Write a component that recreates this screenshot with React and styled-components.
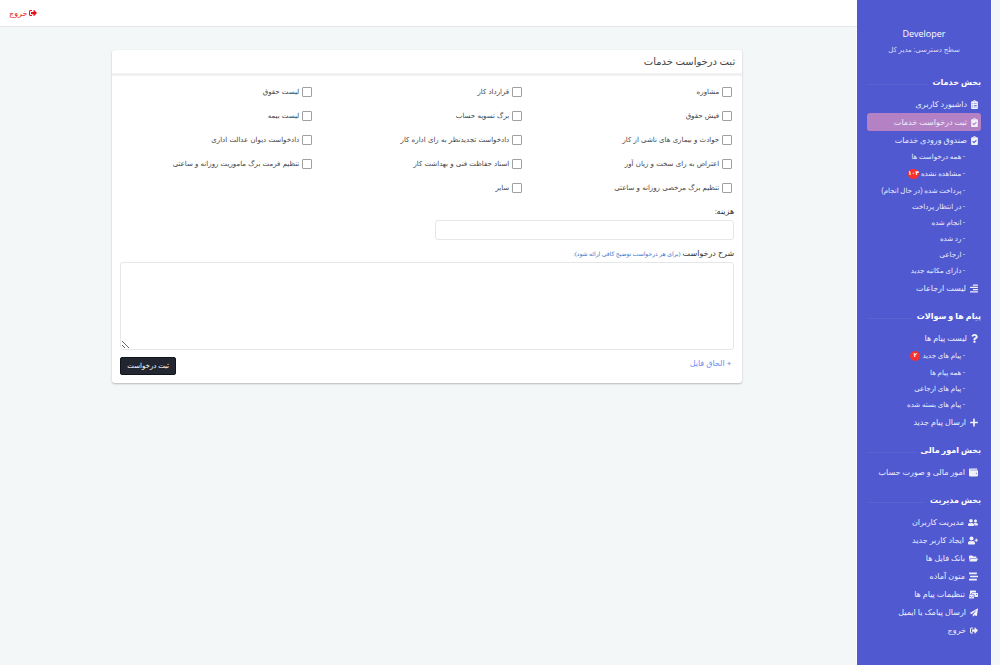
import React, { useState } from 'react';
import styled, { createGlobalStyle } from 'styled-components';
import {
  FaClipboardList,
  FaClipboardCheck,
  FaStream,
  FaAlignRight,
  FaQuestion,
  FaPlus,
  FaWallet,
  FaUserFriends,
  FaUserPlus,
  FaFolderOpen,
  FaMailBulk,
  FaPaperPlane,
  FaSignOutAlt,
} from 'react-icons/fa';

const menu = [
  {
    title: 'بخش خدمات',
    items: [
      { label: 'داشبورد کاربری', icon: FaClipboardList, iconWidth: 7 },
      { label: 'ثبت درخواست خدمات', icon: FaClipboardCheck, iconWidth: 7, active: true },
      {
        label: 'صندوق ورودی خدمات',
        icon: FaClipboardCheck,
        iconWidth: 7,
        children: [
          { label: 'همه درخواست ها' },
          { label: 'مشاهده نشده', count: '۱۰۴' },
          { label: 'پرداخت شده (در حال انجام)' },
          { label: 'در انتظار پرداخت' },
          { label: 'انجام شده' },
          { label: 'رد شده' },
          { label: 'ارجاعی' },
          { label: 'دارای مکاتبه جدید' },
        ],
      },
      { label: 'لیست ارجاعات', icon: FaAlignRight, iconWidth: 8 },
    ],
  },
  {
    title: 'پیام ها و سوالات',
    items: [
      {
        label: 'لیست پیام ها',
        icon: FaQuestion,
        iconWidth: 7,
        children: [
          { label: 'پیام های جدید', count: '۲' },
          { label: 'همه پیام ها' },
          { label: 'پیام های ارجاعی' },
          { label: 'پیام های بسته شده' },
        ],
      },
      { label: 'ارسال پیام جدید', icon: FaPlus, iconWidth: 8 },
    ],
  },
  {
    title: 'بخش امور مالی',
    items: [{ label: 'امور مالی و صورت حساب', icon: FaWallet, iconWidth: 9 }],
  },
  {
    title: 'بخش مدیریت',
    items: [
      { label: 'مدیریت کاربران', icon: FaUserFriends, iconWidth: 10 },
      { label: 'ایجاد کاربر جدید', icon: FaUserPlus, iconWidth: 10 },
      { label: 'بانک فایل ها', icon: FaFolderOpen, iconWidth: 9 },
      { label: 'متون آماده', icon: FaStream, iconWidth: 9 },
      { label: 'تنظیمات پیام ها', icon: FaMailBulk, iconWidth: 9 },
      { label: 'ارسال پیامک یا ایمیل', icon: FaPaperPlane, iconWidth: 8 },
      { label: 'خروج', icon: FaSignOutAlt, iconWidth: 8 },
    ],
  },
];

const services = [
  'مشاوره',
  'قرارداد کار',
  'لیست حقوق',
  'فیش حقوق',
  'برگ تسویه حساب',
  'لیست بیمه',
  'حوادث و بیماری های ناشی از کار',
  'دادخواست تجدیدنظر به رای اداره کار',
  'دادخواست دیوان عدالت اداری',
  'اعتراض به رای سخت و زیان آور',
  'اسناد حفاظت فنی و بهداشت کار',
  'تنظیم فرمت برگ ماموریت روزانه و ساعتی',
  'تنظیم برگ مرخصی روزانه و ساعتی',
  'سایر',
];

function Menu() {
  return (
    <nav>
      {menu.map((section) => (
        <section key={section.title}>
          <SectionTitle>{section.title}</SectionTitle>
          <List>
            {section.items.map((item) => (
              <li key={item.label}>
                <MenuLink href="#" $active={item.active} $iconWidth={item.iconWidth}>
                  <item.icon />
                  {item.label}
                </MenuLink>
                {item.children && (
                  <List>
                    {item.children.map((child) => (
                      <li key={child.label}>
                        <SubLink href="#" $tall={Boolean(child.count)}>
                          - {child.label}
                          {child.count && <Badge>{child.count}</Badge>}
                        </SubLink>
                      </li>
                    ))}
                  </List>
                )}
              </li>
            ))}
          </List>
        </section>
      ))}
    </nav>
  );
}

function RequestForm() {
  const [selected, setSelected] = useState([]);
  const [cost, setCost] = useState('');
  const [description, setDescription] = useState('');

  const toggle = (name) => {
    setSelected(selected.includes(name) ? selected.filter((s) => s !== name) : [...selected, name]);
  };

  return (
    <Card onSubmit={(e) => e.preventDefault()}>
      <CardTitle>ثبت درخواست خدمات</CardTitle>
      <Services>
        {services.map((name) => (
          <Option key={name}>
            <Checkbox checked={selected.includes(name)} onChange={() => toggle(name)} />
            {name}
          </Option>
        ))}
      </Services>
      <Fields>
        <Label htmlFor="cost">هزینه:</Label>
        <Half>
          <Input id="cost" type="text" value={cost} onChange={(e) => setCost(e.target.value)} />
        </Half>
        <Label htmlFor="description">
          شرح درخواست <Hint>(برای هر درخواست توضیح کافی ارائه شود):</Hint>
        </Label>
        <TextArea id="description" value={description} onChange={(e) => setDescription(e.target.value)} />
        <Footer>
          <AttachLink href="#">+ الحاق فایل</AttachLink>
          <SubmitButton type="submit">ثبت درخواست</SubmitButton>
        </Footer>
      </Fields>
    </Card>
  );
}

function App() {
  return (
    <>
      <GlobalStyle />
      <Page dir="rtl">
        <Sidebar>
          <User>
            <UserName>Developer</UserName>
            <UserRole>سطح دسترسی: مدیر کل</UserRole>
          </User>
          <Menu />
        </Sidebar>
        <Content>
          <TopBar>
            <LogoutLink href="#">
              <FaSignOutAlt />
              خروج
            </LogoutLink>
          </TopBar>
          <Main>
            <RequestForm />
          </Main>
        </Content>
      </Page>
    </>
  );
}

export default App;

const GlobalStyle = createGlobalStyle`
  * {
    box-sizing: border-box;
  }
  body {
    margin: 0;
    background: #f4f7f7;
    font-family: Roboto, "DejaVu Sans", sans-serif;
    font-size: 8px;
    color: #444;
  }
  a {
    text-decoration: none;
  }
`;

const Page = styled.div`
  display: flex;
  min-height: 100vh;
  padding-right: 9px;
`;

const Sidebar = styled.aside`
  flex: none;
  width: 134px;
  padding: 26px 10px 0;
  background: #5159d1;
  box-shadow: 0 0 1px 1px #fafcff;
  color: #fff;
`;

const User = styled.div`
  display: flex;
  flex-direction: column;
  align-items: center;
  margin-bottom: 13px;
`;

const UserName = styled.div`
  font-family: "Open Sans", sans-serif;
  font-size: 9px;
  line-height: 16px;
`;

const UserRole = styled.div`
  font-size: 7px;
  line-height: 16px;
  color: #d9dbf5;
`;

const SectionTitle = styled.h2`
  display: flex;
  align-items: center;
  gap: 5px;
  height: 22px;
  margin: 8px 0 2px;
  font-size: 8px;
  font-weight: bold;

  &::after {
    content: '';
    flex: 1;
    height: 1px;
    margin-top: 4px;
    background: #5a61d0;
  }
`;

const List = styled.ul`
  margin: 0;
  padding: 0;
  list-style: none;
`;

const MenuLink = styled.a`
  display: flex;
  align-items: center;
  gap: 4px;
  height: 18px;
  padding: 0 3px;
  border-radius: 3px;
  background: ${(props) => (props.$active ? '#b482c4' : 'transparent')};
  font-size: 8px;
  color: #eeeffb;
  white-space: nowrap;

  svg {
    flex: none;
    width: ${(props) => props.$iconWidth}px;
    height: 9px;
    color: #f1f1f6;
  }
`;

const SubLink = styled.a`
  display: flex;
  align-items: center;
  gap: 2px;
  height: ${(props) => (props.$tall ? '18px' : '16px')};
  padding-right: 16px;
  font-size: 7px;
  color: #eeeffb;
  white-space: nowrap;
`;

const Badge = styled.span`
  display: flex;
  align-items: center;
  justify-content: center;
  min-width: 10px;
  height: 10px;
  padding-bottom: 2px;
  border-radius: 5px;
  background: #f8312f;
  font-weight: bold;
  font-size: 6px;
  line-height: 8px;
  color: #fff;
`;

const Content = styled.div`
  flex: 1;
  min-width: 0;
`;

const TopBar = styled.header`
  display: flex;
  align-items: center;
  justify-content: flex-end;
  height: 27px;
  padding: 0 9px;
  border-bottom: 1px solid #e6e9e9;
  background: #fff;
`;

const LogoutLink = styled.a`
  display: flex;
  align-items: center;
  gap: 2px;
  font-size: 8px;
  color: #e8121c;
`;

const Main = styled.main`
  padding: 23px 13.4% 23px 13.1%;
`;

const Card = styled.form`
  border-radius: 3px;
  background: #fff;
  box-shadow: 0 1px 2px rgba(0, 0, 0, 0.25);
`;

const CardTitle = styled.h1`
  display: flex;
  align-items: center;
  height: 26px;
  margin: 0;
  padding: 0 7px;
  border-bottom: 3px solid #f1f1f1;
  font-size: 10px;
  font-weight: normal;
`;

const Services = styled.div`
  display: grid;
  grid-template-columns: repeat(3, 1fr);
  padding: 4px 0;
`;

const Option = styled.label`
  display: flex;
  align-items: center;
  gap: 3px;
  height: 24px;
  padding-right: 10px;
  font-family: "DejaVu Sans", sans-serif;
  font-size: 7px;
  color: #444;
`;

const Checkbox = styled.input.attrs({ type: 'checkbox' })`
  appearance: none;
  flex: none;
  width: 10px;
  height: 10px;
  margin: 0;
  border: 1px solid #a0a0a0;
  border-radius: 1px;
  background: #fff;

  &:checked {
    background: #5159d1;
  }
`;

const Fields = styled.div`
  padding: 0 8px 8px;
`;

const Label = styled.label`
  display: block;
  height: 16px;
  line-height: 16px;
  font-size: 8px;
  color: #333;
`;

const Hint = styled.span`
  font-size: 6px;
  color: #3d74c4;
`;

const Half = styled.div`
  display: grid;
  grid-template-columns: 1fr 1fr;
  gap: 16px;
  margin-bottom: 6px;
`;

const Input = styled.input`
  height: 20px;
  padding: 0 6px;
  border: 1px solid #e4e6e8;
  border-radius: 3px;
  font: inherit;
`;

const TextArea = styled.textarea`
  display: block;
  width: 100%;
  height: 88px;
  padding: 6px;
  border: 1px solid #e4e6e8;
  border-radius: 3px;
  font: inherit;
  resize: vertical;
`;

const Footer = styled.div`
  display: flex;
  justify-content: space-between;
  align-items: flex-start;
  margin-top: 7px;
`;

const AttachLink = styled.a`
  padding-right: 3px;
  font-size: 8px;
  line-height: 14px;
  color: #6a8df0;
`;

const SubmitButton = styled.button`
  height: 18px;
  padding: 0 6px;
  border: 1px solid #10151c;
  border-radius: 2px;
  background: #212631;
  font: inherit;
  font-size: 7px;
  color: #fff;
`;
